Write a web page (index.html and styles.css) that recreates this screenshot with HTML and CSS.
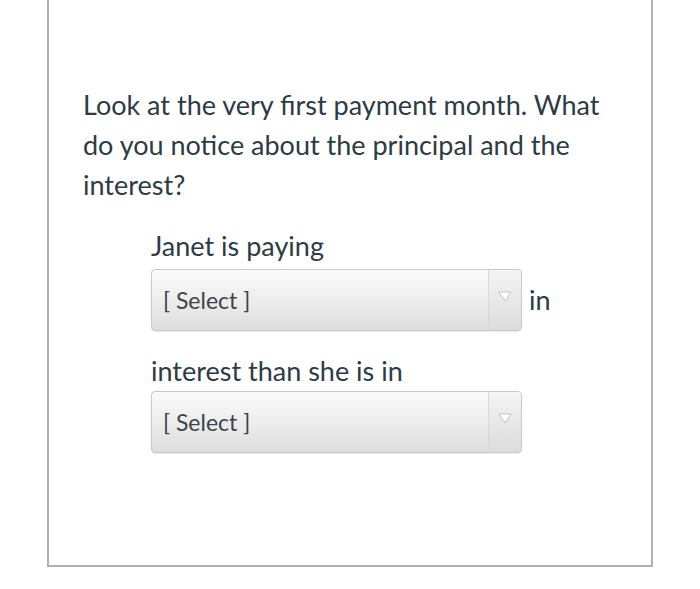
FILE: index.html
```html
<!DOCTYPE html>
<html>
<head>
<meta charset="utf-8">
<link rel="stylesheet" href="styles.css">
</head>
<body>
<div class="card">
  <p class="question">Look at the very first payment month. What do you notice about the principal and the interest?</p>
  <div class="answer">
    <div class="line">Janet is paying</div>
    <div class="select-row">
      <div class="select">
        <span class="select-text">[ Select ]</span>
        <span class="select-arrow">
          <svg width="14" height="11" viewBox="0 0 14 11"><path d="M1 1 L13 1 L7 10 Z" fill="#ffffff" stroke="#c4c4c4" stroke-width="1"/></svg>
        </span>
      </div>
      <span class="after">in</span>
    </div>
    <div class="line line2">interest than she is in</div>
    <div class="select-row">
      <div class="select">
        <span class="select-text">[ Select ]</span>
        <span class="select-arrow">
          <svg width="14" height="11" viewBox="0 0 14 11"><path d="M1 1 L13 1 L7 10 Z" fill="#ffffff" stroke="#c4c4c4" stroke-width="1"/></svg>
        </span>
      </div>
    </div>
  </div>
</div>
</body>
</html>
```
FILE: styles.css
```css
html, body {
  margin: 0;
  padding: 0;
  background: #ffffff;
}
body {
  font-family: Lato, "Open Sans", sans-serif;
  color: #2d3b45;
}
.card {
  box-sizing: border-box;
  margin-left: 47px;
  width: 606px;
  height: 567px;
  border: 2px solid #b0b0b0;
  border-top: none;
  padding: 85px 34px 0 34px;
}
.question {
  margin: 0;
  font-size: 27px;
  line-height: 40px;
}
.answer {
  padding-left: 68px;
  margin-top: 21px;
}
.line {
  font-size: 27px;
  line-height: 40px;
  height: 40px;
}
.line2 {
  margin-top: 20px;
}
.select-row {
  display: flex;
  align-items: center;
  margin-top: 3px;
}
.line2 + .select-row {
  margin-top: 0;
}
.select {
  box-sizing: border-box;
  width: 371px;
  height: 62px;
  border: 1px solid #c8c8c8;
  border-radius: 4px;
  background: linear-gradient(#fbfbfb, #dedede);
  display: flex;
  align-items: stretch;
  box-shadow: 0 1px 1px rgba(0,0,0,0.08);
}
.select-text {
  flex: 1;
  display: flex;
  align-items: center;
  padding-left: 11px;
  font-size: 23px;
  color: #3d4449;
}
.select-arrow {
  width: 33px;
  border-left: 1px solid #d8d8d8;
  background: linear-gradient(#f4f4f4, #dcdcdc);
  border-radius: 0 3px 3px 0;
  display: flex;
  justify-content: center;
  align-items: flex-start;
  padding-top: 21px;
  box-sizing: border-box;
}
.after {
  margin-left: 7px;
  font-size: 27px;
  line-height: 40px;
}
```
